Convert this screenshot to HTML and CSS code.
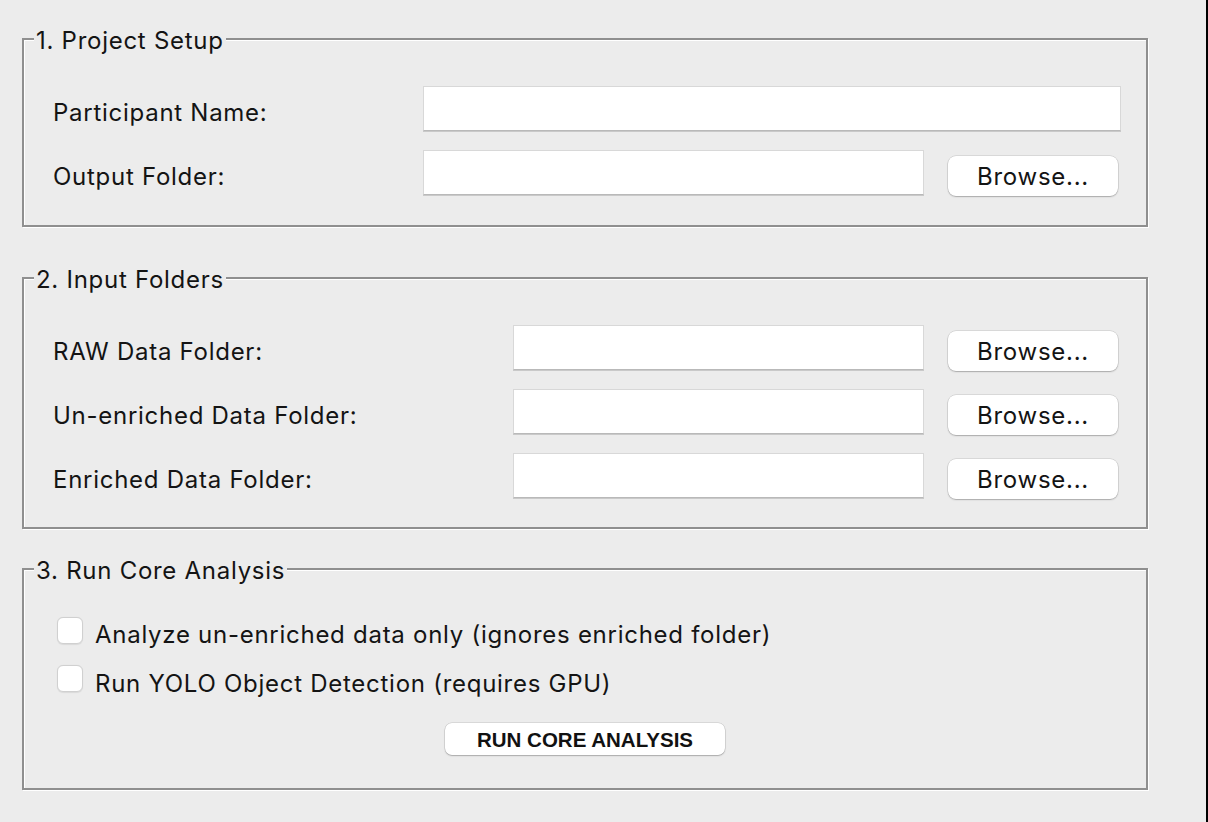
FILE: index.html
```html
<!DOCTYPE html>
<html lang="en">
<head>
<meta charset="utf-8">
<title>Analysis Setup</title>
<link rel="stylesheet" href="styles.css">
</head>
<body>
<div class="window">
  <fieldset class="group group-setup">
    <legend class="group-title">1. Project Setup</legend>
    <div class="group-body form form-setup">
      <label class="field-label">Participant Name:</label>
      <input type="text" class="entry entry-wide">
      <label class="field-label">Output Folder:</label>
      <input type="text" class="entry">
      <button class="browse">Browse...</button>
    </div>
  </fieldset>

  <fieldset class="group group-inputs">
    <legend class="group-title">2. Input Folders</legend>
    <div class="group-body form form-inputs">
      <label class="field-label">RAW Data Folder:</label>
      <input type="text" class="entry">
      <button class="browse">Browse...</button>
      <label class="field-label">Un-enriched Data Folder:</label>
      <input type="text" class="entry">
      <button class="browse">Browse...</button>
      <label class="field-label">Enriched Data Folder:</label>
      <input type="text" class="entry">
      <button class="browse">Browse...</button>
    </div>
  </fieldset>

  <fieldset class="group group-run">
    <legend class="group-title">3. Run Core Analysis</legend>
    <div class="group-body run-body">
      <label class="check-row"><input type="checkbox" class="check"><span class="check-text">Analyze un-enriched data only (ignores enriched folder)</span></label>
      <label class="check-row"><input type="checkbox" class="check"><span class="check-text">Run YOLO Object Detection (requires GPU)</span></label>
      <div class="actions">
        <button class="run-button">RUN CORE ANALYSIS</button>
      </div>
    </div>
  </fieldset>
</div>
</body>
</html>
```

FILE: styles.css
```css
html {
  margin: 0;
  padding: 0;
  background: #000;
  overflow: hidden;
}

body {
  margin: 0 2px 0 0;
  padding: 0;
  background: #ececec;
}

.window {
  box-sizing: border-box;
  height: 100vh;
  background: #ececec;
  padding-top: 25px;
  font-family: Inter, "Liberation Sans", sans-serif;
  font-size: 24px;
  letter-spacing: 0.73px;
  color: #141414;
}

.group {
  box-sizing: border-box;
  width: 1126px;
  margin: 0 0 0 22px;
  padding: 0;
  border: 2px solid #8f8f8f;
  box-shadow: 1px 1px 0 #ffffff, inset 1px 1px 0 #ffffff;
  min-inline-size: 0;
}

.group-inputs { margin-top: 37px; }
.group-run { margin-top: 26px; }

.group-title {
  margin-left: 10px;
  padding: 4px 2px 0 2px;
  line-height: 24px;
  background: #ececec;
}

.group-body {
  padding: 33px 25px 29px 29px;
}

.group-inputs .group-body { padding-bottom: 28px; }

.form {
  display: grid;
  row-gap: 18px;
  align-items: end;
}

.form-setup { grid-template-columns: 370px 1fr 197px; }
.form-inputs { grid-template-columns: 460px 1fr 197px; }

.field-label {
  align-self: center;
  padding-top: 8px;
  line-height: 28px;
  white-space: nowrap;
}

.entry {
  box-sizing: border-box;
  height: 45px;
  margin: 0 0 1px 0;
  padding: 0 8px;
  background: #fff;
  border: 1px solid #d8d8d8;
  border-bottom-color: #b9b9b9;
  box-shadow: 0 1px 0 #c9c9c9;
  border-radius: 0;
  outline: none;
  font: inherit;
}

.entry-wide { grid-column: 2 / 4; }

.browse {
  box-sizing: border-box;
  width: 170px;
  height: 40px;
  margin: 0 0 0 24px;
  padding: 1px 0 0 0;
  border: none;
  border-radius: 8px;
  background: #fff;
  box-shadow: 0 0 0 0.5px rgba(0, 0, 0, 0.16), 0 1px 1.5px rgba(0, 0, 0, 0.22);
  font-family: inherit;
  font-size: 24px;
  letter-spacing: 0.73px;
  color: #141414;
  line-height: 38px;
}

.run-body {
  display: flex;
  flex-direction: column;
  padding: 34px 33px 33px 33px;
}

.check-row {
  display: flex;
  align-items: center;
  height: 27px;
  gap: 12px;
}

.check-row + .check-row { margin-top: 21px; }

.check {
  appearance: none;
  -webkit-appearance: none;
  box-sizing: border-box;
  width: 26px;
  height: 27px;
  margin: 0;
  background: #fff;
  border: 1px solid #d0d0d0;
  border-radius: 6px;
  box-shadow: 0 0.5px 1px rgba(0, 0, 0, 0.08);
}

.check-text {
  padding-top: 7px;
  line-height: 27px;
  white-space: nowrap;
}

.check-row + .check-row .check-text { padding-top: 9px; }

.actions {
  display: flex;
  justify-content: center;
  margin-top: 31px;
}

.run-button {
  box-sizing: border-box;
  width: 280px;
  height: 32px;
  padding: 1px 0 0 0;
  border: none;
  border-radius: 7px;
  background: #fff;
  box-shadow: 0 0 0 0.5px rgba(0, 0, 0, 0.16), 0 1px 1.5px rgba(0, 0, 0, 0.22);
  font-family: "Liberation Sans", Arial, sans-serif;
  font-weight: bold;
  font-size: 20.5px;
  letter-spacing: 0;
  color: #111;
}
```
